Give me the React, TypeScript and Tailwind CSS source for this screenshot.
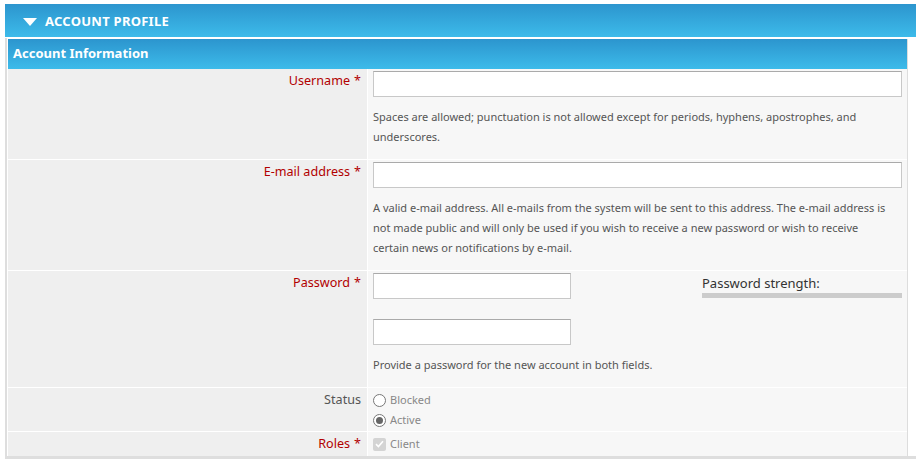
import type { ReactNode } from "react";

const font = { fontFamily: '"Noto Sans", "DejaVu Sans", sans-serif' };

function Row({ label, required, children }: { label: string; required?: boolean; children: ReactNode }) {
  return (
    <div className="grid grid-cols-[359px_1fr] gap-x-px">
      <div
        className={`bg-[#efefef] pt-[2px] pr-[6px] text-right text-[12.6px] leading-5 ${required ? "text-[#b20000]" : "text-[#555]"}`}
      >
        {label}
        {required && <span className="ml-[4px]">*</span>}
      </div>
      <div className="bg-[#f7f7f7] pl-[5px] pr-[5px]">{children}</div>
    </div>
  );
}

function TextInput({ className = "" }: { className?: string }) {
  return <div className={`h-[26px] border border-[#c8c8c8] border-t-[#aaa] bg-white ${className}`} />;
}

function Help({ children }: { children: ReactNode }) {
  return <p className="mt-[10px] text-[11px] leading-5 text-[#555]">{children}</p>;
}

function Radio({ checked, label }: { checked?: boolean; label: string }) {
  return (
    <div className="flex h-5 items-center gap-[4px] text-[11px] text-[#888]">
      <span className="flex h-[13px] w-[13px] items-center justify-center rounded-full border border-[#777] bg-white">
        {checked && <span className="h-[7px] w-[7px] rounded-full bg-[#666]" />}
      </span>
      {label}
    </div>
  );
}

export default function App() {
  return (
    <div className="w-[916px] overflow-hidden bg-white pt-[4px] pl-[5px]" style={font}>
      <div className="flex h-[33px] items-center bg-gradient-to-b from-[#2c95ce] to-[#3dbbea] pt-[3px] pl-[18px]">
        <svg width="14" height="8" viewBox="0 0 14 8" className="mr-[8px]">
          <path d="M0 0H14L7 8Z" fill="#fff" />
        </svg>
        <span className="text-[13px] font-bold tracking-[0.02em] text-white">ACCOUNT PROFILE</span>
      </div>
      <div className="mt-[1px] border-b-[3px] border-l-2 border-[#dedede] pt-[1px] pl-[1px]">
        <div className="w-[900px] border-r border-[#ddd]">
          <div className="flex h-[30px] items-center bg-gradient-to-b from-[#2c95ce] to-[#3dbbea] pl-[5px] text-[13px] font-bold text-white">
            Account Information
          </div>
          <div className="flex flex-col gap-y-px bg-white">
            <Row label="Username" required>
              <div className="pt-[2px] pb-[12px]">
                <TextInput />
                <Help>
                  Spaces are allowed; punctuation is not allowed except for periods, hyphens, apostrophes, and
                  underscores.
                </Help>
              </div>
            </Row>
            <Row label="E-mail address" required>
              <div className="pt-[2px] pb-[12px]">
                <TextInput />
                <Help>
                  A valid e-mail address. All e-mails from the system will be sent to this address. The e-mail address is
                  <br />
                  not made public and will only be used if you wish to receive a new password or wish to receive
                  <br />
                  certain news or notifications by e-mail.
                </Help>
              </div>
            </Row>
            <Row label="Password" required>
              <div className="pt-[2px] pb-[12px]">
                <div className="flex items-start justify-between">
                  <TextInput className="w-[198px]" />
                  <div className="w-[200px]">
                    <div className="text-[13px] leading-5 text-[#333]">Password strength:</div>
                    <div className="h-[5px] bg-[#ccc]" />
                  </div>
                </div>
                <TextInput className="mt-[20px] w-[198px]" />
                <Help>Provide a password for the new account in both fields.</Help>
              </div>
            </Row>
            <Row label="Status">
              <div className="pt-[2px] pb-[1px]">
                <Radio label="Blocked" />
                <Radio checked label="Active" />
              </div>
            </Row>
            <Row label="Roles" required>
              <div className="pt-[2px] pb-[2px]">
                <div className="flex h-5 items-center gap-[4px] text-[11px] text-[#888]">
                  <span className="flex h-[13px] w-[13px] items-center justify-center rounded-[2px] bg-[#d4d4d4]">
                    <svg width="9" height="8" viewBox="0 0 9 8">
                      <path d="M1 4.2L3.4 6.5L8 1.2" stroke="#fff" strokeWidth="1.6" fill="none" />
                    </svg>
                  </span>
                  Client
                </div>
              </div>
            </Row>
          </div>
        </div>
      </div>
    </div>
  );
}
